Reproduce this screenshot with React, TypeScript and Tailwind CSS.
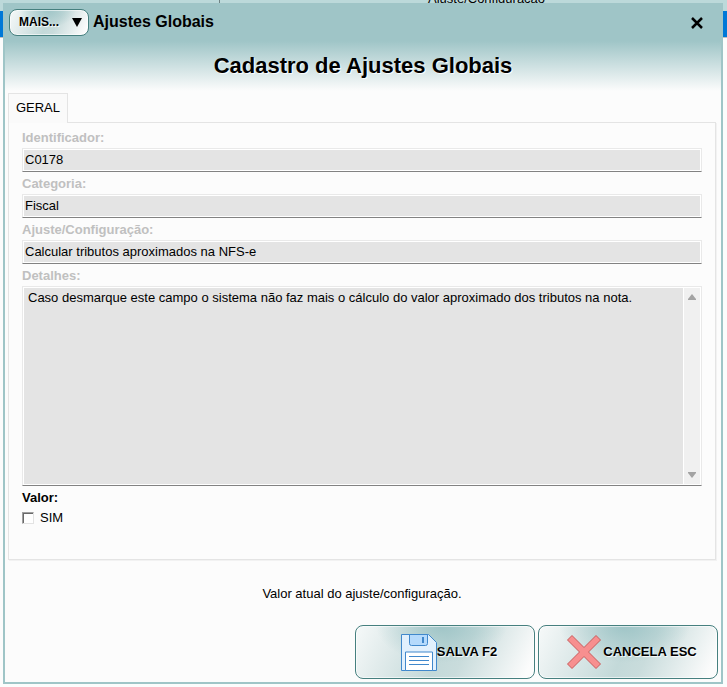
import { useState } from 'react';

const raised = '[text-shadow:1px_1px_1px_#ffffff]';
const buttonSkin =
  'rounded-lg border border-[#46807f] font-bold ring-1 ring-white/60 ring-inset bg-[radial-gradient(ellipse_at_48%_0%,#9fc5c7_0%,#9fc5c700_50%),linear-gradient(115deg,#f6f9f9_0%,#dfeaea_22%,#c3d9d9_48%,#c9dcdc_60%,#fcfcfc_95%)]';

const fields = [
  { id: 'identificador', label: 'Identificador:', value: 'C0178' },
  { id: 'categoria', label: 'Categoria:', value: 'Fiscal' },
  { id: 'ajuste', label: 'Ajuste/Configuração:', value: 'Calcular tributos aproximados na NFS-e' },
];

const details =
  'Caso desmarque este campo o sistema não faz mais o cálculo do valor aproximado dos tributos na nota.';

const labelClass = 'block h-[22px] text-[13px] leading-6 font-bold';
const frameClass = 'border border-[#e9e9e9] border-b-[#828282] bg-white p-px';

function SaveIcon() {
  return (
    <svg className="h-[37px] w-9 shrink-0" viewBox="0 0 36 37" fill="none" stroke="#4088cc" aria-hidden="true">
      <path d="M.5.5h27l8 8v28H.5z" fill="#e1f0fd" />
      <path d="M8.5.5v9q0 2 2 2h14q2 0 2-2v-9z" fill="#b5dafc" />
      <path d="M22 3v6" strokeWidth="2" />
      <path d="M4.5 36.5v-18.500h27v18.500z" fill="#fff" />
      <path d="M8 22.500h20M8 26.500h20M8 30.500h20" />
    </svg>
  );
}

function CancelIcon() {
  return (
    <svg className="size-[34px] shrink-0" viewBox="0 0 34 34" aria-hidden="true">
      <path
        d="M5 .5 17 12.500 29 .5 33.500 5 21.500 17 33.500 29 29 33.500 17 21.500 5 33.500 .5 29 12.500 17 .5 5z"
        fill="#f78f8f"
        stroke="#c85a5a"
      />
    </svg>
  );
}

function Backdrop() {
  return (
    <div className="absolute inset-0 overflow-hidden bg-[#fcfcfc]" aria-hidden="true">
      <div className="flex h-[11px] bg-[#bcd9da]">
        <div className="w-[220px] border-r border-[#6f8283]" />
        <div className="-mt-[9px] flex-1 pl-[208px] text-[13px] leading-4">Ajuste/Configuração</div>
      </div>
      <div className="h-[26px] bg-[#0078d7]" />
      <div className="h-px bg-[#c0c0c0]" />
    </div>
  );
}

export default function App() {
  const [checked, setChecked] = useState(false);

  return (
    <div className="relative flex min-h-screen flex-col pt-[3px] pr-1 pb-[3px] pl-[3px] font-['Liberation_Sans',Arial,sans-serif] text-black">
      <Backdrop />
      <main className="relative flex flex-1 flex-col border-2 border-t-0 border-[#9fc5c7] bg-[#fcfcfc]">
        <header className="bg-[linear-gradient(#9fc5c7_38px,#fcfcfc_88px)]">
          <div className="flex h-[38px] items-center gap-1 pr-[15px] pl-1">
            <button
              type="button"
              className={`flex h-[27px] w-20 items-center justify-between pr-1.5 pl-[9px] text-xs ${buttonSkin} ${raised}`}
            >
              MAIS...
              <svg className="h-[9px] w-[10px]" viewBox="0 0 10 9" aria-hidden="true">
                <path d="M0 0h10L5 9z" />
              </svg>
            </button>
            <span className="flex-1 text-base font-bold">Ajustes Globais</span>
            <button type="button" aria-label="Fechar">
              <svg className="size-[18px]" viewBox="0 0 18 18" stroke="#000" strokeWidth="2.500" aria-hidden="true">
                <path d="M4 5l10 10M14 5 4 15" />
              </svg>
            </button>
          </div>
          <h1 className={`h-[52px] pt-2 text-center text-[22px] leading-[34px] font-bold ${raised}`}>
            Cadastro de Ajustes Globais
          </h1>
        </header>

        <div className="pr-[5px] pl-[3px]">
          <div role="tablist" className="flex">
            <button
              type="button"
              role="tab"
              aria-selected="true"
              className="-mb-px h-[30px] w-[60px] border border-b-0 border-[#e4e4e4] bg-[#fafafa] pb-0.5 text-[13px]"
            >
              GERAL
            </button>
          </div>
          <section className="border border-[#e4e4e4] px-[13px] pt-[3px] pb-[31px] shadow-[1px_1px_0_#f2f2f2]">
            {fields.map((f) => (
              <div key={f.id}>
                <label htmlFor={f.id} className={`${labelClass} text-[#c0c0c0]`}>
                  {f.label}
                </label>
                <div className={frameClass}>
                  <input
                    id={f.id}
                    readOnly
                    defaultValue={f.value}
                    className="block h-5 w-full bg-[#e4e4e4] px-px pb-0.5 text-[13px] outline-none"
                  />
                </div>
              </div>
            ))}
            <label htmlFor="detalhes" className={`${labelClass} text-[#c0c0c0]`}>
              Detalhes:
            </label>
            <div className={`flex ${frameClass}`}>
              <textarea
                id="detalhes"
                readOnly
                defaultValue={details}
                className="block h-[196px] flex-1 resize-none overflow-hidden bg-[#e4e4e4] px-1 pt-0.5 text-[13px] leading-4 outline-none"
              />
              <div className="ml-px flex w-4 flex-col items-center justify-between bg-[#f0f0f0] py-1.5" aria-hidden="true">
                <svg className="h-1.5 w-2" viewBox="0 0 8 6" fill="#a3a3a3">
                  <path d="M0 6V5l4-5 4 5v1z" />
                </svg>
                <svg className="h-1.5 w-2" viewBox="0 0 8 6" fill="#a3a3a3">
                  <path d="M0 0v1l4 5 4-5V0z" />
                </svg>
              </div>
            </div>
            <div className={labelClass}>Valor:</div>
            <label className="flex h-5 items-center gap-1.5 text-[13px]">
              <input
                type="checkbox"
                checked={checked}
                onChange={(e) => setChecked(e.target.checked)}
                className="size-3 appearance-none border border-t-[#a0a0a0] border-r-[#e3e3e3] border-b-[#e3e3e3] border-l-[#a0a0a0] bg-white shadow-[inset_1px_1px_0_#696969] checked:bg-[#9fc5c7]"
              />
              SIM
            </label>
          </section>
        </div>

        <p className="flex-1 pt-6 pr-0.5 text-center text-[13px] leading-5">Valor atual do ajuste/configuração.</p>

        <footer className="flex justify-end gap-[3px] p-[3px]">
          <button
            type="button"
            className={`flex h-[54px] w-[180px] items-center justify-center pl-2 text-[13px] ${buttonSkin} ${raised}`}
          >
            <SaveIcon />
            SALVA F2
          </button>
          <button
            type="button"
            className={`flex h-[54px] w-[180px] items-center justify-center gap-0.5 pl-2 text-[13px] ${buttonSkin} ${raised}`}
          >
            <CancelIcon />
            CANCELA ESC
          </button>
        </footer>
      </main>
    </div>
  );
}
